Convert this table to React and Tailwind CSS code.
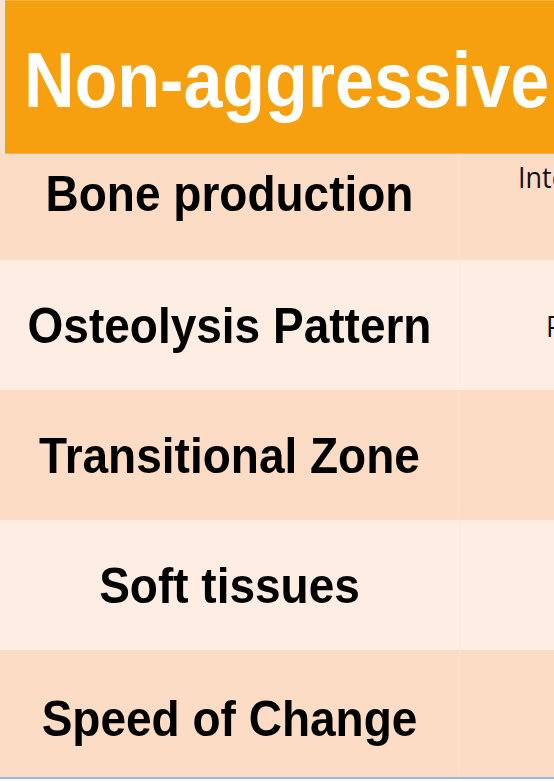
export default function App() {
    const rows = [
        { label: "Bone production", note: "Intermittent", bg: "bg-[#fcdcc4]", h: "h-[106px]", pad: "pb-[28px]", noteClass: "self-start pt-[9px] pl-[58px]" },
        { label: "Osteolysis Pattern", note: "Punched out", bg: "bg-[#fdede2]", h: "h-[130px]", pad: "", noteClass: "self-center pl-[86px]" },
        { label: "Transitional Zone", note: "", bg: "bg-[#fcdcc4]", h: "h-[130px]", pad: "", noteClass: "" },
        { label: "Soft tissues", note: "", bg: "bg-[#fdede2]", h: "h-[130px]", pad: "", noteClass: "" },
        { label: "Speed of Change", note: "", bg: "bg-[#fcdcc4]", h: "h-[127px]", pad: "pt-[8px]", noteClass: "" },
    ];

    return (
        <div className="w-[554px] h-[782px] overflow-hidden bg-white font-['Liberation_Sans',Arial,sans-serif]">
            {/* Bandeau titre */}
            <div className="flex h-[154px] bg-[#fbe1cd]">
                <div className="w-[5px] border-r border-[#fdeee2]" />
                <div className="flex-1 flex items-center pt-[8px] pl-[19px] bg-[#f7a00f] border-t border-[#f9b240] border-b border-b-[#f9b650] overflow-hidden whitespace-nowrap">
                    <span className="inline-block scale-y-110 text-white font-bold text-[70px] leading-none">
                        Non-aggressive
                    </span>
                </div>
            </div>

            {/* Lignes du tableau */}
            {rows.map((row) => (
                <div key={row.label} className={`flex ${row.h} ${row.bg}`}>
                    <div className={`w-[460px] shrink-0 flex items-center justify-center border-r border-[#fde9dc] ${row.pad}`}>
                        <span className="inline-block scale-y-110 text-black font-bold text-[46px] leading-none whitespace-nowrap">
                            {row.label}
                        </span>
                    </div>
                    <div className="flex-1 flex overflow-hidden whitespace-nowrap">
                        {row.note && (
                            <span className={`inline-block scale-y-110 text-[#111] text-[27px] leading-none font-['Open_Sans',sans-serif] ${row.noteClass}`}>
                                {row.note}
                            </span>
                        )}
                    </div>
                </div>
            ))}

            <div className="h-[2px] bg-[#9fb6dc]" />
        </div>
    );
}
